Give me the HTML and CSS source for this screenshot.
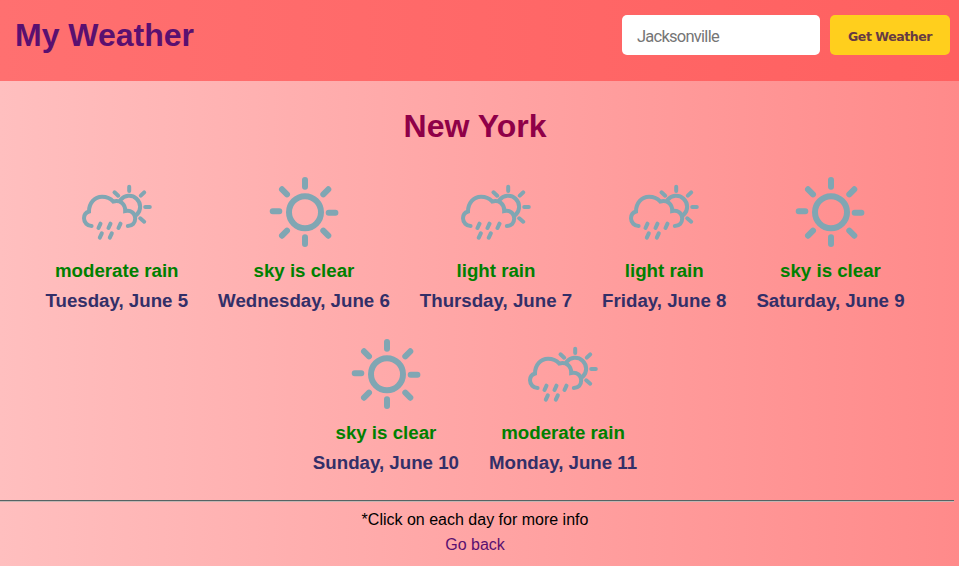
FILE: index.html
```
<!DOCTYPE html>
<html lang="en">
<head>
<meta charset="utf-8">
<title>My Weather</title>
<link rel="stylesheet" href="styles.css">
</head>
<body>
<svg class="defs" aria-hidden="true">
  <symbol id="sun" viewBox="0 0 70 70">
    <circle cx="36" cy="35.300" r="16"/>
    <path d="M36 3v6.700M36 60.300v6.700M3.700 34.300h6.600M59.700 35.700h6.700M13 12.300l5 5M59.300 12.300l-5 5M13 58.700l5-5M54.300 53.700l5 5"/>
  </symbol>
  <symbol id="rain" viewBox="0 0 70 70">
    <path d="M9.600 49C5.500 49 2 45.500 2 41.300C2 38 4 35.500 7 34.500C7 26 12.700 19.700 20 19.700C24.500 19.700 28.500 21.300 31.200 24.500C38 22.500 43.500 27 43.200 34C49 32.700 53.200 36.500 53.200 41.300C53.200 46 50.500 49 45.800 49"/>
    <path d="M38.500 23A11 11 0 1 1 54.700 37.800M47.200 9.700V14M32.500 15.300l3.700 3.400M62.200 15.300l-3.400 3.400M63.200 30h4.600M58.200 41.300l4 3.400M18.500 46.700l-2 4.300M28.500 46.700l-2 4.300M38.500 46.700l-2 4.300M19.800 56.300l-2 4.400M29.800 56.300l-2 4.400"/>
  </symbol>
</svg>
<header class="header">
  <h1>My Weather</h1>
  <form class="search"><input type="text" placeholder="Jacksonville" aria-label="City"><button type="button">Get Weather</button></form>
</header>
<main class="main">
  <h2>New York</h2>
  <div class="days">
    <div class="day"><svg class="rain"><use href="#rain"/></svg><p class="desc">moderate rain</p><p class="date">Tuesday, June 5</p></div>
    <div class="day"><svg class="sun"><use href="#sun"/></svg><p class="desc">sky is clear</p><p class="date">Wednesday, June 6</p></div>
    <div class="day"><svg class="rain"><use href="#rain"/></svg><p class="desc">light rain</p><p class="date">Thursday, June 7</p></div>
    <div class="day"><svg class="rain"><use href="#rain"/></svg><p class="desc">light rain</p><p class="date">Friday, June 8</p></div>
    <div class="day"><svg class="sun"><use href="#sun"/></svg><p class="desc">sky is clear</p><p class="date">Saturday, June 9</p></div>
    <div class="day"><svg class="sun"><use href="#sun"/></svg><p class="desc">sky is clear</p><p class="date">Sunday, June 10</p></div>
    <div class="day"><svg class="rain"><use href="#rain"/></svg><p class="desc">moderate rain</p><p class="date">Monday, June 11</p></div>
  </div>
  <hr>
  <footer class="footer"><p>*Click on each day for more info</p><a href="#">Go back</a></footer>
</main>
</body>
</html>
```
FILE: styles.css
```
* { box-sizing: border-box; }
body { margin: 0; height: 566px; overflow: hidden; font: 16px "Liberation Sans", Arial, sans-serif; background: linear-gradient(to right, #ffbfbf, #ff8a8a); }
h1, h2, p { margin: 0; }
.defs { display: none; }
.header { height: 81px; padding: 15px 9px 0 15px; display: flex; justify-content: space-between; align-items: flex-start; background: linear-gradient(to right, #ff7070, #ff6060); }
h1 { font-size: 32px; line-height: 40px; color: #5a1070; }
.search { display: flex; gap: 10px; }
.search input { width: 198px; height: 40px; padding: 3px 15px 0; border: 0; border-radius: 5px; background: #fff; font: 16.500px Roboto, sans-serif; letter-spacing: -0.750px; }
.search input::placeholder { color: #757575; opacity: 1; }
.search button { width: 120px; height: 40px; padding: 2px 0 0; border: 0; border-radius: 5px; background: #ffcf1d; color: #663a43; font: bold 12.500px "DejaVu Sans", sans-serif; letter-spacing: -0.450px; }
.main { width: 954px; padding-right: 4px; }
h2 { padding-top: 26px; text-align: center; font-size: 32px; line-height: 38px; color: #8f0048; }
.days { display: flex; flex-wrap: wrap; justify-content: center; row-gap: 23px; padding: 32px 30px 0; }
.day { width: max-content; margin: 0 15px; text-align: center; font-size: 18.700px; font-weight: bold; }
.day svg { display: block; width: 70px; height: 70px; margin: 0 auto 9px; fill: none; stroke: #80a6b3; stroke-linecap: round; }
.day .sun { stroke-width: 6; }
.day .rain { stroke-width: 4; }
.desc, .date { line-height: 30px; }
.desc { color: #008000; }
.date { color: #332f68; }
hr { width: 954px; height: 2px; margin: 22px 0 0; border: 0; border-top: 1px solid #566363; border-bottom: 1px solid #c5b5b3; }
.footer { padding-top: 5px; text-align: center; line-height: 25px; }
.footer a { color: #5a1070; text-decoration: none; }
```
